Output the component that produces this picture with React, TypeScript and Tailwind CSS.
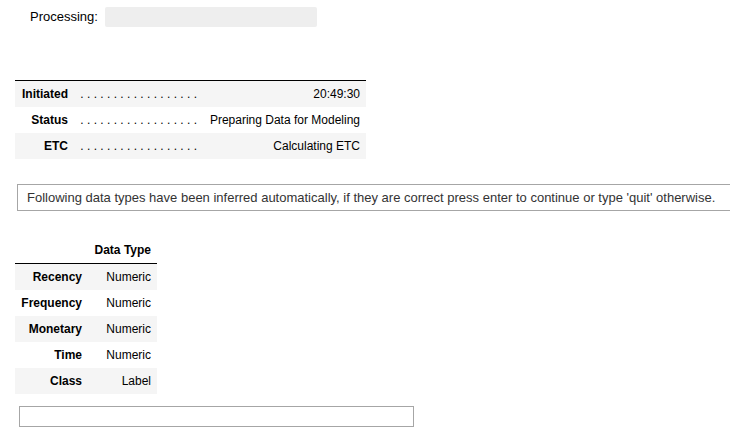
import React from "react";

const font = { fontFamily: '"Liberation Sans", Arial, sans-serif' };

const monitor = [
  ["Initiated", "20:49:30"],
  ["Status", "Preparing Data for Modeling"],
  ["ETC", "Calculating ETC"],
];

const dtypes = [
  ["Recency", "Numeric"],
  ["Frequency", "Numeric"],
  ["Monetary", "Numeric"],
  ["Time", "Numeric"],
  ["Class", "Label"],
];

const DOTS = ". . . . . . . . . . . . . . . . . .";

export default function App() {
  return (
    <div
      className="w-[730px] h-[432px] overflow-hidden bg-white text-black font-['Liberation_Sans',Arial,sans-serif]"
      style={font}
    >
      {/* Processing bar */}
      <div className="flex items-center pt-[7px] h-[27px]">
        <div className="w-[105px] pl-[30px] text-[13px] leading-[20px] text-[#000]">Processing:</div>
        <div className="w-[212px] h-[20px] rounded-[2px] bg-[#eeeeee]" />
      </div>

      {/* Monitor table */}
      <div className="ml-[15px] mt-[53px] w-[351px] border-t border-black text-[12px] leading-[14px]">
        {monitor.map(([k, v], i) => (
          <div key={k} className={`flex h-[26px] items-center ${i % 2 === 0 ? "bg-[#f5f5f5]" : "bg-white"}`}>
            <div className="w-[59px] px-[6px] text-right font-bold">{k}</div>
            <div className="w-[129px] px-[6px] text-right whitespace-pre">{DOTS}</div>
            <div className="w-[163px] px-[6px] text-right whitespace-nowrap">{v}</div>
          </div>
        ))}
      </div>

      {/* Message box */}
      <div className="ml-[17px] mt-[25px] w-[760px] h-[27px] border border-[#a6a6a6] flex items-center pl-[9px] text-[13px] text-[#333333] whitespace-nowrap">
        Following data types have been inferred automatically, if they are correct press enter to continue or type 'quit' otherwise.
      </div>

      {/* Data types table */}
      <div className="ml-[15px] mt-[26px] w-[142px] text-[12px] leading-[14px]">
        <div className="flex h-[27px] items-center border-b border-black">
          <div className="w-[73px]" />
          <div className="w-[69px] px-[6px] text-right font-bold">Data Type</div>
        </div>
        {dtypes.map(([k, v], i) => (
          <div key={k} className={`flex h-[26px] items-center ${i % 2 === 0 ? "bg-[#f5f5f5]" : "bg-white"}`}>
            <div className="w-[73px] px-[6px] text-right font-bold">{k}</div>
            <div className="w-[69px] px-[6px] text-right">{v}</div>
          </div>
        ))}
      </div>

      {/* Input */}
      <div className="ml-[19px] mt-[12px] w-[395px] h-[21px] border border-[#a6a6a6] bg-white" />
    </div>
  );
}
